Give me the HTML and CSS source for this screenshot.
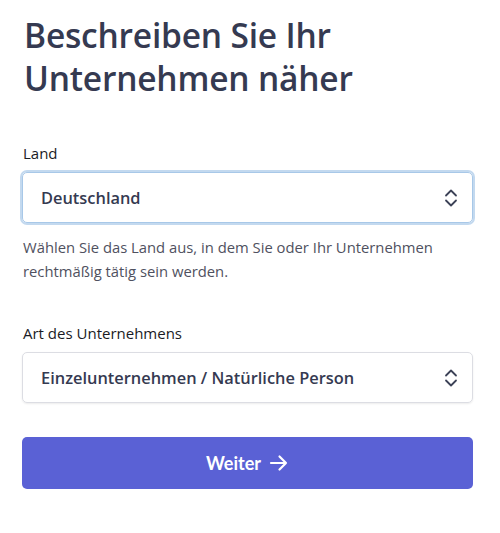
FILE: index.html
```html
<!DOCTYPE html>
<html lang="de">
<head>
<meta charset="utf-8">
<link rel="stylesheet" href="styles.css">
</head>
<body>
<main class="form">
  <h1 class="title">Beschreiben Sie Ihr Unternehmen näher</h1>
  <div class="field field-first">
    <label class="label">Land</label>
    <div class="select select-focus">
      <span class="value">Deutschland</span>
      <svg class="chev" width="14" height="20" viewBox="0 0 14 20"><path d="M2 7.5 L7 2.5 L12 7.5 M2 12.5 L7 17.5 L12 12.5" fill="none" stroke="#3c4257" stroke-width="1.8" stroke-linecap="round" stroke-linejoin="round"/></svg>
    </div>
    <p class="help">Wählen Sie das Land aus, in dem Sie oder Ihr Unternehmen rechtmäßig tätig sein werden.</p>
  </div>
  <div class="field field-second">
    <label class="label">Art des Unternehmens</label>
    <div class="select">
      <span class="value">Einzelunternehmen / Natürliche Person</span>
      <svg class="chev" width="14" height="20" viewBox="0 0 14 20"><path d="M2 7.5 L7 2.5 L12 7.5 M2 12.5 L7 17.5 L12 12.5" fill="none" stroke="#3c4257" stroke-width="1.8" stroke-linecap="round" stroke-linejoin="round"/></svg>
    </div>
  </div>
  <button class="btn">Weiter
    <svg class="arrow" width="20" height="18" viewBox="0 0 20 18"><path d="M2 9 H17 M10.5 2.5 L17 9 L10.5 15.5" fill="none" stroke="#fff" stroke-width="2.2" stroke-linecap="round" stroke-linejoin="round"/></svg>
  </button>
</main>
</body>
</html>
```
FILE: styles.css
```css
* { box-sizing: border-box; }
body {
  margin: 0;
  background: #fff;
  font-family: "Open Sans", "Noto Sans", sans-serif;
  color: #30313d;
}
.form {
  padding: 14px 27px 0 22px;
  display: flex;
  flex-direction: column;
}
.title {
  margin: 0 0 0 2px;
  font-size: 33.5px;
  line-height: 43px;
  font-weight: 600;
  color: #353a51;
  letter-spacing: -0.2px;
}
.field-first { margin-top: 43px; }
.field-second { margin-top: 40px; }
.label {
  display: block;
  font-size: 15px;
  line-height: 21px;
  color: #1a1b25;
  margin: 0 0 8px 1px;
}
.select {
  height: 51px;
  border: 1px solid #dcdde3;
  border-radius: 5px;
  display: flex;
  align-items: center;
  justify-content: space-between;
  padding: 0 14px 0 18px;
  box-shadow: 0 1px 2px rgba(0,0,0,0.08);
}
.select-focus {
  border-color: #a8c8e8;
  box-shadow: 0 0 0 2px #c3d9ef;
}
.value {
  font-size: 16.4px;
  font-weight: 600;
  color: #353a51;
}
.chev { display: block; }
.help {
  margin: 12px 0 0 1px;
  font-size: 14.8px;
  line-height: 24px;
  color: #4f5160;
}
.btn {
  margin-top: 34px;
  height: 52px;
  border: 0;
  border-radius: 5px;
  background: #5a61d5;
  color: #fff;
  font-family: "Lato", sans-serif;
  font-weight: 700;
  font-size: 18px;
  display: flex;
  align-items: center;
  justify-content: center;
  gap: 8px;
}
.arrow { display: block; }
```
